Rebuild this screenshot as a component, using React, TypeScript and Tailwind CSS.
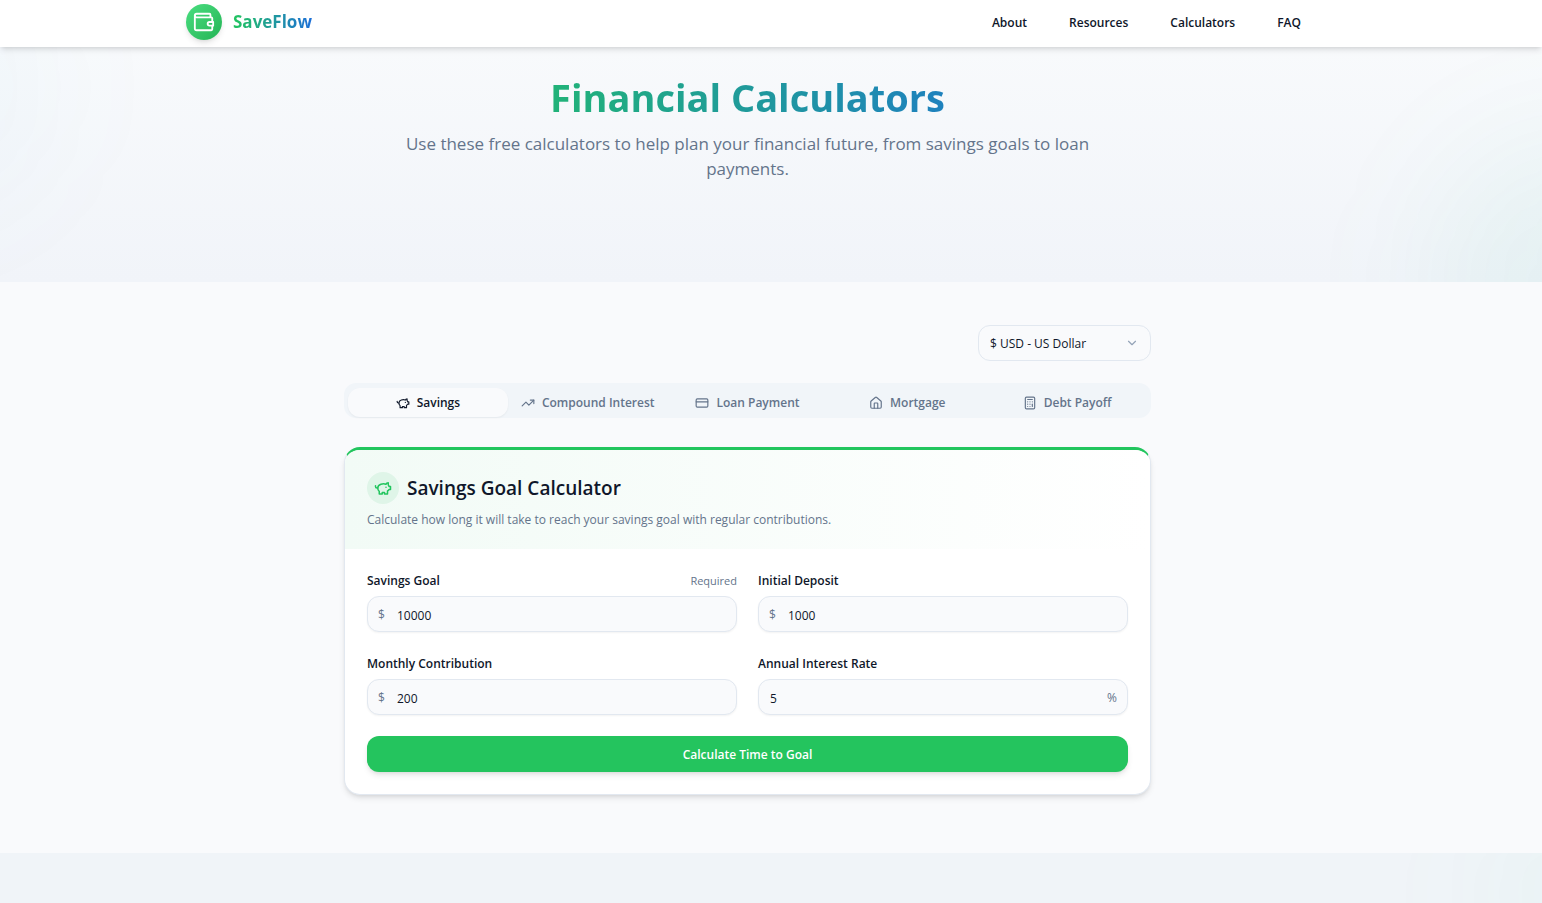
import { useState } from 'react';
import { Calculator, ChevronDown, CreditCard, House, TrendingUp } from 'lucide-react';

type IconProps = { className?: string };

function PiggyIcon({ className }: IconProps) {
  return (
    <svg className={className} viewBox="0 0 24 24" fill="none" stroke="currentColor" strokeWidth={2} strokeLinecap="round" strokeLinejoin="round" aria-hidden="true">
      <path d="M19 5c-1.5 0-2.8 1.4-3 2-3.5-1.5-11-.3-11 5 0 1.8 0 3 2 4.5V20h4v-2h3v2h4v-4c1-.5 1.7-1 2-2h2v-4h-2c0-1-.5-1.5-1-2V5z" />
      <path d="M2 9v1c0 1.1.9 2 2 2h1" />
      <path d="M16 11h.01" />
    </svg>
  );
}

function WalletIcon({ className }: IconProps) {
  return (
    <svg className={className} viewBox="0 0 24 24" fill="none" stroke="currentColor" strokeWidth={2} strokeLinecap="round" strokeLinejoin="round" aria-hidden="true">
      <path d="M19 7V4a1 1 0 0 0-1-1H4a2 2 0 0 0 0 4h16a1 1 0 0 1 1 1v4" />
      <path d="M2 5v14a2 2 0 0 0 2 2h16a1 1 0 0 0 1-1v-4" />
      <path d="M22 12h-4a2 2 0 0 0 0 4h4Z" />
    </svg>
  );
}

const links = ['About', 'Resources', 'Calculators', 'FAQ'];

const tabs = [
  { label: 'Savings', icon: PiggyIcon },
  { label: 'Compound Interest', icon: TrendingUp },
  { label: 'Loan Payment', icon: CreditCard },
  { label: 'Mortgage', icon: House },
  { label: 'Debt Payoff', icon: Calculator },
];

const fields = [
  { id: 'goal', label: 'Savings Goal', value: '10000', unit: '$', required: true },
  { id: 'deposit', label: 'Initial Deposit', value: '1000', unit: '$', required: false },
  { id: 'monthly', label: 'Monthly Contribution', value: '200', unit: '$', required: false },
  { id: 'rate', label: 'Annual Interest Rate', value: '5', unit: '%', required: false },
];

export default function App() {
  const [activeTab, setActiveTab] = useState('Savings');

  return (
    <div className="min-h-screen flex flex-col bg-[#f9fafc] font-['Open_Sans',sans-serif] text-xs leading-[18px] text-[#0f172a]">
      <header className="relative z-10 bg-white pr-[47px] shadow-md">
        <div className="mx-auto flex max-w-[1123px] items-center justify-between pt-1 pb-[7px]">
          <a href="#" className="flex items-center gap-[11px]">
            <span className="flex size-9 items-center justify-center rounded-full bg-linear-to-br from-[#4ade80] to-[#22b455] text-white shadow-md">
              <WalletIcon className="size-[22px]" />
            </span>
            <span className="bg-linear-to-r/srgb from-[#22c55e] to-[#1d6fd8] bg-clip-text text-[17px] leading-6 font-bold text-transparent">SaveFlow</span>
          </a>
          <nav className="flex gap-[42px] pt-[2px] pr-2 font-semibold">
            {links.map(link => (
              <a key={link} href="#" className="hover:text-green-600">{link}</a>
            ))}
          </nav>
        </div>
      </header>

      {/* Hero */}
      <section className="relative overflow-hidden bg-linear-to-b from-[#f8fafc] to-[#f1f4f9] pt-6 pr-[47px] pb-[101px] text-center">
        <div className="absolute -right-44 -bottom-36 size-72 rounded-full bg-emerald-500/5 blur-3xl" />
        <div className="absolute -top-20 -left-48 size-60 rounded-full bg-sky-600/3 blur-3xl" />
        <div className="relative mx-auto max-w-[692px]">
          <h1 className="mb-2 bg-linear-to-r/srgb from-[#22c55e] to-[#1d6fd8] bg-clip-text text-[38px] leading-[52px] font-bold text-transparent">
            Financial Calculators
          </h1>
          <p className="text-[17px] leading-[25px] text-[#64748b]">
            Use these free calculators to help plan your financial future, from savings goals to loan payments.
          </p>
        </div>
      </section>

      <main className="pr-[47px]">
        <div className="mx-auto flex max-w-[807px] flex-col pt-[43px] pb-[58px]">
          <div className="relative mb-[22px] w-[173px] self-end">
            <select aria-label="Currency" className="h-9 w-full appearance-none rounded-xl border border-[#e2e8f0] bg-[#f9fafc] pt-[2px] pl-[11px]">
              <option>$ USD - US Dollar</option>
              <option>€ EUR - Euro</option>
              <option>£ GBP - British Pound</option>
            </select>
            <ChevronDown className="pointer-events-none absolute top-[11px] right-3 size-[14px] text-[#94a3b8]" />
          </div>

          <div role="tablist" className="mb-[29px] grid grid-cols-5 rounded-xl bg-[#f1f5f9] px-1 pt-[5px] pb-px">
            {tabs.map(({ label, icon: Icon }) => (
              <button
                key={label}
                role="tab"
                aria-selected={activeTab === label}
                onClick={() => setActiveTab(label)}
                className={`flex h-[29px] items-center justify-center gap-[7px] rounded-xl font-semibold whitespace-nowrap ${
                  activeTab === label ? 'bg-[#f9fafc] text-[#0f172a] shadow-xs' : 'text-[#64748b]'
                }`}
              >
                <Icon className="size-[14px]" />
                {label}
              </button>
            ))}
          </div>

          <form
            onSubmit={e => e.preventDefault()}
            className="overflow-hidden rounded-2xl border border-t-3 border-[#e2e8f0] border-t-[#22c55e] bg-white shadow-md"
          >
            <div className="bg-linear-to-r from-[#f2fbf6] to-white px-[22px] pt-[22px] pb-5">
              <div className="mb-[7px] flex items-center gap-2">
                <span className="flex size-8 items-center justify-center rounded-full bg-[#dff5e8] text-[#22c55e]">
                  <PiggyIcon className="size-[18px]" />
                </span>
                <h2 className="text-[19px] leading-8 font-semibold">Savings Goal Calculator</h2>
              </div>
              <p className="text-[#64748b]">
                Calculate how long it will take to reach your savings goal with regular contributions.
              </p>
            </div>

            <div className="px-[22px] pt-[23px] pb-[22px]">
              <div className="grid grid-cols-2 gap-x-[21px] gap-y-[23px]">
                {fields.map(field => (
                  <div key={field.id}>
                    <div className="mb-[6px] flex items-center justify-between">
                      <label htmlFor={field.id} className="font-semibold">{field.label}</label>
                      {field.required && <span className="text-[11px] text-[#64748b]">Required</span>}
                    </div>
                    <div className="relative">
                      <input
                        id={field.id}
                        type="text"
                        inputMode="decimal"
                        defaultValue={field.value}
                        className={`h-9 w-full rounded-xl border border-[#e2e8f0] bg-[#f9fafc] pt-[2px] pr-8 shadow-xs ${
                          field.unit === '$' ? 'pl-[29px]' : 'pl-[11px]'
                        }`}
                      />
                      <span className={`pointer-events-none absolute top-[10px] text-[#64748b] ${
                        field.unit === '$' ? 'left-[11px]' : 'right-[11px]'
                      }`}>
                        {field.unit}
                      </span>
                    </div>
                  </div>
                ))}
              </div>
              <button type="submit" className="mt-[21px] h-9 w-full rounded-xl bg-[#24c45e] pt-[2px] font-semibold text-white shadow-md">
                Calculate Time to Goal
              </button>
            </div>
          </form>
        </div>
      </main>

      <footer className="relative min-h-[50px] flex-1 overflow-hidden bg-[#f0f4f8]">
        <div className="absolute -top-10 -right-28 size-40 rounded-full bg-emerald-500/4 blur-3xl" />
      </footer>
    </div>
  );
}
